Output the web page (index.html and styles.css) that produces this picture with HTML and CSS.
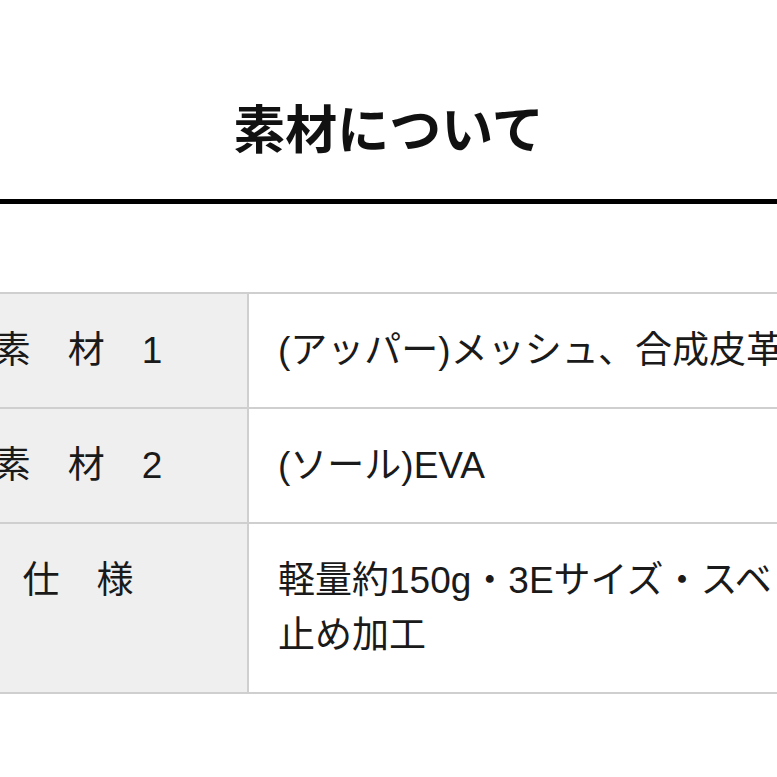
FILE: index.html
```html
<!DOCTYPE html>
<html lang="ja">
<head>
<meta charset="utf-8">
<title>素材について</title>
<link rel="stylesheet" href="styles.css">
</head>
<body>
<div class="page">
  <h1 class="title">素材について</h1>
  <div class="rule"></div>
  <table class="spec">
    <tr>
      <th>素　材　1</th>
      <td>(アッパー)メッシュ、合成皮革</td>
    </tr>
    <tr>
      <th>素　材　2</th>
      <td>(ソール)EVA</td>
    </tr>
    <tr>
      <th>仕　様</th>
      <td>軽量約150g・3Eサイズ・スベリ<br>止め加工</td>
    </tr>
  </table>
</div>
</body>
</html>
```

FILE: styles.css
```css
html, body {
  margin: 0;
  padding: 0;
  background: #fff;
}
body {
  width: 777px;
  height: 777px;
  overflow: hidden;
}
.page {
  width: 777px;
  overflow: hidden;
  padding-top: 101px;
}
.title {
  margin: 0;
  font-family: "Noto Sans CJK JP", sans-serif;
  font-weight: 700;
  font-size: 52px;
  line-height: 52px;
  text-align: center;
  color: #111;
}
.rule {
  margin-top: 46px;
  height: 5px;
  background: #000;
}
.spec {
  margin-top: 88px;
  margin-left: -93px;
  width: 1200px;
  border-collapse: collapse;
  font-family: "Liberation Sans", "Noto Sans CJK JP", sans-serif;
  font-size: 37px;
  line-height: 55px;
  color: #1a1a1a;
}
.spec th,
.spec td {
  border: 2px solid #cfcfcf;
  padding: 29px 0 29px 29px;
  vertical-align: top;
  text-align: left;
  font-weight: 400;
  white-space: nowrap;
}
.spec th {
  width: 338px;
  padding: 29px 0 29px 0;
  background: #efefef;
  text-align: center;
}
```
